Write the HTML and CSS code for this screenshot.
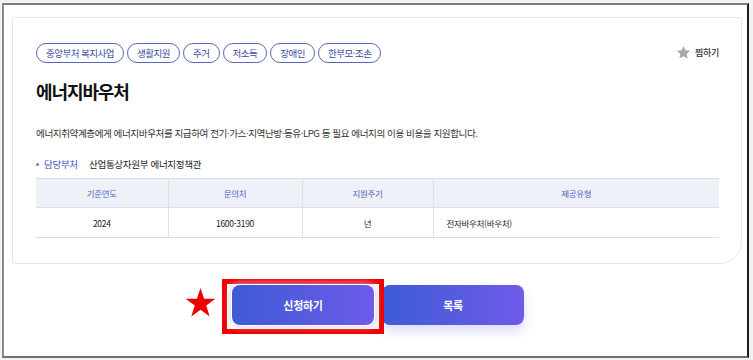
FILE: index.html
```html
<!DOCTYPE html>
<html lang="ko">
<head>
    <meta charset="UTF-8">
    <meta name="viewport" content="width=device-width, initial-scale=1.0">
    <title>에너지바우처</title>
    <link rel="stylesheet" href="styles.css">
</head>
<body>
    <div class="frame">
        <div class="card">
            <div class="card-top">
                <ul class="tags">
                    <li class="tag">중앙부처 복지사업</li>
                    <li class="tag">생활지원</li>
                    <li class="tag">주거</li>
                    <li class="tag">저소득</li>
                    <li class="tag">장애인</li>
                    <li class="tag">한부모·조손</li>
                </ul>
                <button class="fav">
                    <svg class="fav-icon" viewBox="0 0 24 24" width="15" height="15">
                        <path d="M12 1.5l3.2 6.9 7.4.8-5.5 5 1.6 7.4L12 17.8l-6.7 3.8 1.6-7.4-5.5-5 7.4-.8z" fill="#a9a9a9"/>
                    </svg>
                    찜하기
                </button>
            </div>

            <h1 class="title">에너지바우처</h1>

            <p class="desc">에너지취약계층에게 에너지바우처를 지급하여 전기·가스·지역난방·등유·LPG 등 필요 에너지의 이용 비용을 지원합니다.</p>

            <div class="dept">
                <span class="dept-label">담당부처</span>
                <span class="dept-value">산업통상자원부 에너지정책관</span>
            </div>

            <table class="info-table">
                <colgroup>
                    <col class="col-year">
                    <col class="col-contact">
                    <col class="col-cycle">
                    <col class="col-type">
                </colgroup>
                <thead>
                    <tr>
                        <th>기준연도</th>
                        <th>문의처</th>
                        <th>지원주기</th>
                        <th>제공유형</th>
                    </tr>
                </thead>
                <tbody>
                    <tr>
                        <td>2024</td>
                        <td>1600-3190</td>
                        <td>년</td>
                        <td class="left">전자바우처(바우처)</td>
                    </tr>
                </tbody>
            </table>
        </div>

        <div class="actions">
            <div class="highlight">
                <svg class="mark-star" viewBox="0 0 24 24" width="33" height="32">
                    <path d="M12 0.8l2.7 8.1h8.5l-6.9 5 2.6 8.2L12 17l-6.9 5.1 2.6-8.2-6.9-5h8.5z" fill="#ee0000"/>
                </svg>
                <span class="mark-box"></span>
                <button class="btn">신청하기</button>
            </div>
            <button class="btn">목록</button>
        </div>
    </div>
</body>
</html>
```

FILE: styles.css
```css
* {
    box-sizing: border-box;
}
body {
    margin: 0;
    background: #f2f2f2;
    font-family: "Noto Sans CJK KR", "Noto Sans", sans-serif;
    color: #222;
}
.frame {
    margin: 3px 0 0 2px;
    width: 747px;
    height: 355px;
    background: #fff;
    border-top: 2px solid #7c7c7c;
    border-left: 2px solid #8a8a8a;
    border-right: 2px solid #1c1c1c;
    border-bottom: 2px solid #6e6e6e;
    padding: 12px 5px 0 8px;
}
.card {
    border: 1px solid #e6e6e6;
    border-radius: 3px 3px 22px 3px;
    padding: 24px 22px 25px 23px;
    background: #fff;
}
.card-top {
    display: flex;
    justify-content: space-between;
    align-items: center;
    height: 21px;
}
.tags {
    display: flex;
    gap: 3px;
    list-style: none;
    margin: 0;
    padding: 0;
}
.tag {
    height: 20px;
    line-height: 18px;
    padding: 0 9px;
    border: 1px solid #5868b8;
    border-radius: 10px;
    font-size: 9.5px;
    letter-spacing: -0.5px;
    color: #3c4c9c;
}
.fav {
    display: flex;
    align-items: center;
    gap: 4px;
    padding: 0;
    border: none;
    background: none;
    font-family: inherit;
    font-size: 9px;
    font-weight: 500;
    color: #333;
    letter-spacing: -0.3px;
}
.title {
    margin: 15px 0 0;
    font-size: 18px;
    line-height: 26px;
    font-weight: 700;
    letter-spacing: -1.1px;
    color: #111;
}
.desc {
    margin: 21px 0 0;
    font-size: 9.6px;
    line-height: 16px;
    letter-spacing: -0.45px;
    color: #333;
}
.dept {
    margin-top: 15px;
    display: flex;
    align-items: center;
    font-size: 9.5px;
    line-height: 16px;
    letter-spacing: -0.3px;
}
.dept-label {
    position: relative;
    padding-left: 8px;
    width: 53px;
    color: #3e56c6;
}
.dept-label::before {
    content: "";
    position: absolute;
    left: 0;
    top: 7px;
    width: 3px;
    height: 3px;
    border-radius: 50%;
    background: #6b7fd6;
}
.dept-value {
    color: #222;
}
.info-table {
    margin-top: 6px;
    width: 683px;
    border-collapse: collapse;
    table-layout: fixed;
    font-size: 8.5px;
    letter-spacing: -0.3px;
}
.col-year { width: 132px; }
.col-contact { width: 134px; }
.col-cycle { width: 131px; }
.col-type { width: 286px; }
.info-table th {
    height: 29px;
    background: #eef1f8;
    border-top: 1px solid #d6dbe8;
    border-bottom: 1px solid #dde0e8;
    font-weight: 400;
    color: #5565bf;
}
.info-table td {
    height: 30px;
    text-align: center;
    border-bottom: 1px solid #dddddd;
    color: #222;
}
.info-table th + th,
.info-table td + td {
    border-left: 1px solid #e0e0e0;
}
.info-table td.left {
    text-align: left;
    padding-left: 13px;
}
.actions {
    margin-top: 21px;
    display: flex;
    justify-content: center;
    gap: 8px;
    padding-left: 2px;
}
.highlight {
    position: relative;
}
.btn {
    width: 142px;
    height: 40px;
    border: none;
    border-radius: 8px;
    background: linear-gradient(90deg, #3d5bd4, #6e5be9);
    box-shadow: 0 6px 12px rgba(104, 92, 220, 0.22);
    color: #fff;
    font-family: inherit;
    font-size: 11px;
    font-weight: 700;
    letter-spacing: -0.3px;
}
.highlight .btn {
    position: relative;
    box-shadow: 0 0 0 1px #fff, 0 0 6px 3px rgba(200, 200, 230, 0.6);
}
.mark-box {
    position: absolute;
    left: -10px;
    top: -6px;
    width: 162px;
    height: 55px;
    border: 5px solid #f00000;
}
.mark-star {
    position: absolute;
    left: -48px;
    top: 2px;
}
```
